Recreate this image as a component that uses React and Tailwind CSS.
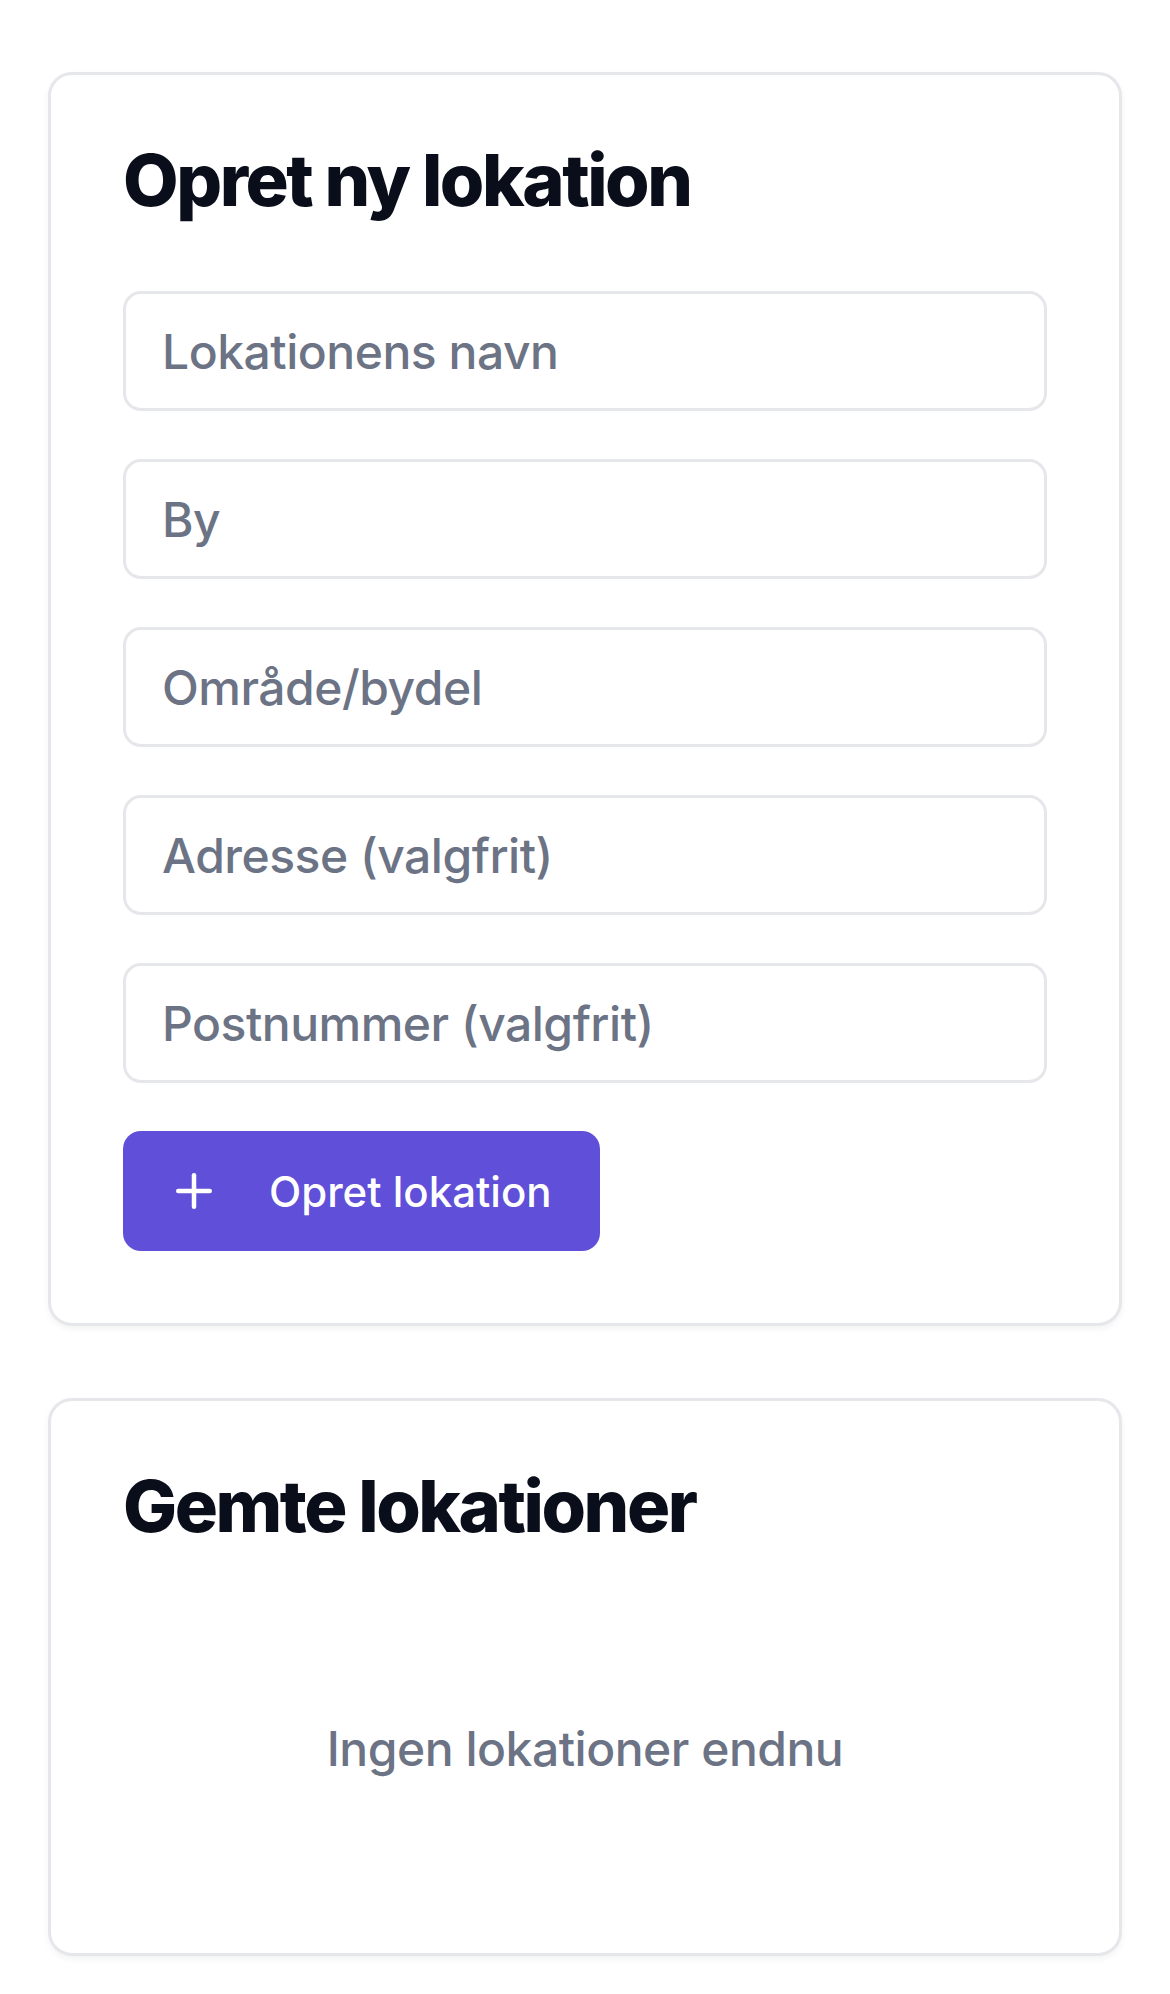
import { Plus } from 'lucide-react';

const fields = [
    'Lokationens navn',
    'By',
    'Område/bydel',
    'Adresse (valgfrit)',
    'Postnummer (valgfrit)',
];

export default function App() {
    return (
        <div
            className="min-h-screen bg-white px-[48px] pt-[72px] pb-[40px] flex flex-col gap-[72px]"
            style={{ fontFamily: 'Inter, "Noto Sans", sans-serif' }}
        >
            {/* Create form */}
            <div className="bg-white border-[3px] border-[#e6e7eb] rounded-[24px] shadow-[0_3px_6px_rgba(0,0,0,0.05)] p-[72px]">
                <h1 className="text-[72px] leading-none font-extrabold tracking-[-0.034em] text-[#0a0e1a] -mt-[3px] mb-[75px]">
                    Opret ny lokation
                </h1>
                <form className="flex flex-col gap-[48px]" onSubmit={e => e.preventDefault()}>
                    {fields.map(f => (
                        <input
                            key={f}
                            placeholder={f}
                            className="w-full h-[120px] bg-white border-[3px] border-[#e6e7eb] rounded-[18px] px-[36px] text-[48px] font-medium tracking-[-0.01em] text-[#0a0e1a] placeholder:text-[#6b7385] outline-none"
                        />
                    ))}
                    <div>
                        <button
                            type="submit"
                            className="h-[120px] inline-flex items-center gap-[48px] pl-[44px] pr-[48px] rounded-[18px] bg-[#604fd8] text-white text-[42px] font-medium"
                        >
                            <Plus className="w-[54px] h-[54px]" strokeWidth={2} />
                            Opret lokation
                        </button>
                    </div>
                </form>
            </div>

            {/* Saved list */}
            <div className="bg-white border-[3px] border-[#e6e7eb] rounded-[24px] shadow-[0_3px_6px_rgba(0,0,0,0.05)] p-[72px]">
                <h2 className="text-[72px] leading-none font-extrabold tracking-[-0.034em] text-[#0a0e1a] -mt-[3px] mb-[75px]">
                    Gemte lokationer
                </h2>
                <div className="py-[96px] text-center text-[48px] leading-[72px] font-medium tracking-[-0.01em] text-[#6b7385]">
                    Ingen lokationer endnu
                </div>
            </div>
        </div>
    );
}
